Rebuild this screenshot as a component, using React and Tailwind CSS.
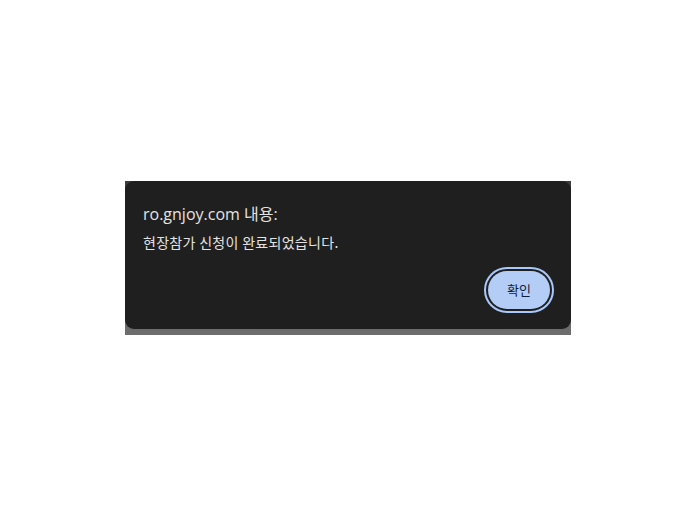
export default function App() {
  return (
    <div className="w-[696px] h-[516px] bg-white flex items-center justify-center">
      <div className="w-[446px] h-[154px] flex flex-col bg-gradient-to-b from-[#3c3c3c] to-[#6e6e6e]">
        <div className="h-[148px] rounded-[9px] bg-[#1f1f1f] flex flex-col pl-[18px] pr-[17px] pt-[22px] pb-[16px]">
          <div
            className="text-[16px] leading-[22px] text-[#e3e3e3]"
            style={{ fontFamily: '"Open Sans", "Noto Sans CJK KR", sans-serif' }}
          >
            ro.gnjoy.com 내용:
          </div>
          <div
            className="mt-[8px] text-[14px] leading-[19px] tracking-[0.3px] text-[#e3e3e3]"
            style={{ fontFamily: '"Noto Sans CJK KR", sans-serif' }}
          >
            현장참가 신청이 완료되었습니다.
          </div>
          <div className="mt-auto flex justify-end">
            <button className="w-[70px] h-[46px] rounded-full border-2 border-[#a8c7fa] p-[2px] flex">
              <span
                className="flex-1 rounded-full bg-[#b3cdf7] flex items-center justify-center text-[13px] text-[#0b1d3d]"
                style={{ fontFamily: '"Noto Sans CJK KR", sans-serif' }}
              >
                확인
              </span>
            </button>
          </div>
        </div>
      </div>
    </div>
  );
}
